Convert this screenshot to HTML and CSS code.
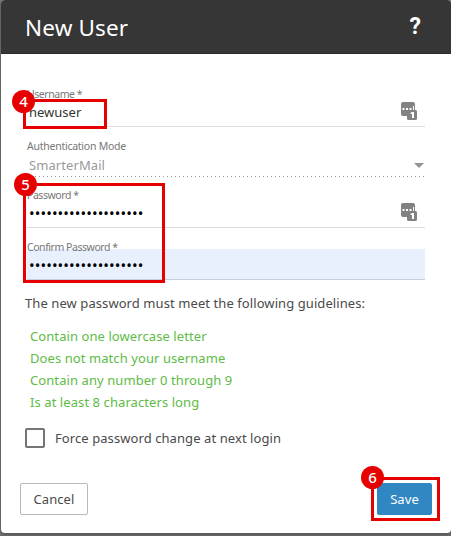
FILE: index.html
```html
<!DOCTYPE html>
<html lang="en">
<head>
    <meta charset="UTF-8">
    <meta name="viewport" content="width=device-width, initial-scale=1.0">
    <title>New User</title>
    <link rel="stylesheet" href="styles.css">
</head>
<body>
    <form class="dialog">
        <header class="dialog-header">
            <h1>New User</h1>
            <span class="help">?</span>
        </header>

        <div class="dialog-body">
            <div class="field">
                <label class="label-username" for="username">Username *</label>
                <input type="text" id="username" value="newuser">
                <svg class="key-icon" width="17" height="19" viewBox="0 0 17 19">
                    <path fill="#828282" d="M2 0h10a2 2 0 0 1 2 2v6h.5A1.5 1.5 0 0 1 16 9.500v7a1.500 1.500 0 0 1-1.500 1.500h-7A1.500 1.500 0 0 1 6 16.500V14H2a2 2 0 0 1-2-2V2a2 2 0 0 1 2-2z"/>
                    <path fill="#fff" d="M1.500 6h2v2h-2zM5 6h2v2H5zM8.500 6h2v2h-2zM12 4h1v4h-1zM11 10h2v6h-2v-4H9.500v-1z"/>
                </svg>
            </div>
            <div class="field field-select">
                <label class="label-mode">Authentication Mode</label>
                <span class="select-value">SmarterMail</span>
                <span class="arrow"></span>
            </div>
            <div class="field">
                <label class="label-password" for="password">Password *</label>
                <input type="password" id="password" value="abcdefgh12345678abcd">
                <svg class="key-icon" width="17" height="19" viewBox="0 0 17 19">
                    <path fill="#828282" d="M2 0h10a2 2 0 0 1 2 2v6h.5A1.5 1.5 0 0 1 16 9.500v7a1.500 1.500 0 0 1-1.500 1.500h-7A1.500 1.500 0 0 1 6 16.500V14H2a2 2 0 0 1-2-2V2a2 2 0 0 1 2-2z"/>
                    <path fill="#fff" d="M1.500 6h2v2h-2zM5 6h2v2H5zM8.500 6h2v2h-2zM12 4h1v4h-1zM11 10h2v6h-2v-4H9.500v-1z"/>
                </svg>
            </div>
            <div class="field field-filled">
                <label class="label-confirm" for="confirm">Confirm Password *</label>
                <input type="password" id="confirm" value="abcdefgh12345678abcd">
            </div>

            <p class="guidelines-title">The new password must meet the following guidelines:</p>
            <ul class="guidelines">
                <li>Contain one lowercase letter</li>
                <li>Does not match your username</li>
                <li>Contain any number 0 through 9</li>
                <li>Is at least 8 characters long</li>
            </ul>

            <div class="check-row">
                <span class="checkbox"></span>
                <span class="check-label">Force password change at next login</span>
            </div>
        </div>

        <footer class="dialog-footer">
            <button type="button" class="btn">Cancel</button>
            <button type="button" class="btn btn-primary">Save</button>
        </footer>

        <!-- Step markers -->
        <div class="step step-4"><span>4</span></div>
        <div class="step step-5"><span>5</span></div>
        <div class="step step-6"><span>6</span></div>
    </form>
</body>
</html>
```
FILE: styles.css
```css
* {
    box-sizing: border-box;
}
body {
    margin: 0;
    height: 536px;
    padding-left: 1px;
    overflow: hidden;
    background-color: #737373;
    font-family: "Noto Sans", "Open Sans", sans-serif;
    font-size: 13px;
    letter-spacing: 0.08px;
    color: #4a4a4a;
}
.dialog {
    position: relative;
    display: flex;
    flex-direction: column;
    height: 533px;
    background-color: #fff;
    border-radius: 4px;
    box-shadow: 0 2px 4px rgba(0, 0, 0, 0.3);
}
.dialog-header {
    display: flex;
    align-items: center;
    justify-content: space-between;
    height: 54px;
    padding: 0 30px 0 24px;
    background-color: #363636;
    border-bottom: 1px solid #2b2b2b;
    border-radius: 4px 4px 0 0;
    color: #fff;
}
h1 {
    margin: 2px 0 0;
    font-size: 22.5px;
    font-weight: normal;
    line-height: 30px;
    letter-spacing: 0.15px;
}
.help {
    font-family: Roboto, sans-serif;
    font-size: 23px;
    font-weight: bold;
    line-height: 24px;
}
.dialog-body {
    flex: 1;
    padding: 42px 26px 0 24px;
}
.field {
    position: relative;
    display: flex;
    align-items: center;
    height: 31px;
    margin-left: 2px;
    padding-right: 7px;
    border-bottom: 1px solid #dcdcdc;
}
/* Floating label sits over the top edge of the input */
.field label {
    position: absolute;
    top: -10px;
    left: 0;
    font-size: 10.5px;
    letter-spacing: -0.45px;
    line-height: 16px;
    color: #777;
    white-space: nowrap;
}
.field .label-mode {
    top: -9px;
    letter-spacing: -0.25px;
}
.field input {
    flex: 1;
    min-width: 0;
    height: 30px;
    padding: 2px 0 0 2px;
    border: none;
    outline: none;
    background: none;
    font: inherit;
    color: #333;
}
.field input[type="password"] {
    font-size: 15px;
    letter-spacing: 0.08px;
    color: #000;
}
.field-select {
    height: 30px;
    margin-top: 20px;
    padding-right: 1px;
    justify-content: space-between;
    border-bottom: none;
    background: repeating-linear-gradient(to right, #999 0 1px, transparent 1px 4px) bottom / 100% 1px no-repeat;
}
.select-value {
    padding: 6px 0 0 2px;
    color: #999;
    font-size: 13px;
}
.arrow {
    margin-top: 7px;
    border: 5px solid transparent;
    border-top-color: #949494;
    border-bottom: none;
}
.field-select + .field {
    margin-top: 20px;
}
.field-filled {
    margin-top: 21px;
    background-color: #e8f0fe;
    border-bottom-color: #c8ceda;
}
.guidelines-title {
    margin: 13px 0 0;
    line-height: 20px;
    white-space: nowrap;
}
.guidelines {
    margin: 12px 0 0;
    padding: 0 0 0 5px;
    list-style: none;
    line-height: 22px;
    color: #60bb46;
}
.check-row {
    display: flex;
    align-items: center;
    gap: 10px;
    margin-top: 15px;
}
.checkbox {
    width: 20px;
    height: 20px;
    border: 2px solid #757575;
    border-radius: 2px;
}
.dialog-footer {
    display: flex;
    justify-content: space-between;
    padding: 0 19px 18px;
}
.btn {
    width: 68px;
    height: 32px;
    padding: 0;
    background-color: #fff;
    border: 1px solid #b8b8b8;
    border-radius: 2px;
    font: inherit;
    letter-spacing: inherit;
    color: #4a4a4a;
}
.btn-primary {
    width: 55px;
    background-color: #3187c1;
    border-color: #3187c1;
    color: #fff;
}
.step {
    position: absolute;
    border: 3px solid #e60000;
    pointer-events: none;
}
.step span {
    position: absolute;
    top: -13px;
    left: -14px;
    width: 23px;
    height: 23px;
    border-radius: 50%;
    background-color: #e60000;
    color: #fff;
    font-size: 15px;
    font-weight: 500;
    line-height: 23px;
    text-align: center;
}
.step-4 {
    top: 99px;
    left: 22px;
    width: 84px;
    height: 30px;
}
.step-4 span {
    top: -12px;
}
.step-5 {
    top: 183px;
    left: 22px;
    width: 142px;
    height: 100px;
}
.step-5 span {
    left: -12px;
}
.step-6 {
    top: 477px;
    left: 370px;
    width: 69px;
    height: 44px;
}
.step-6 span {
    top: -14px;
    left: -13px;
}
```
